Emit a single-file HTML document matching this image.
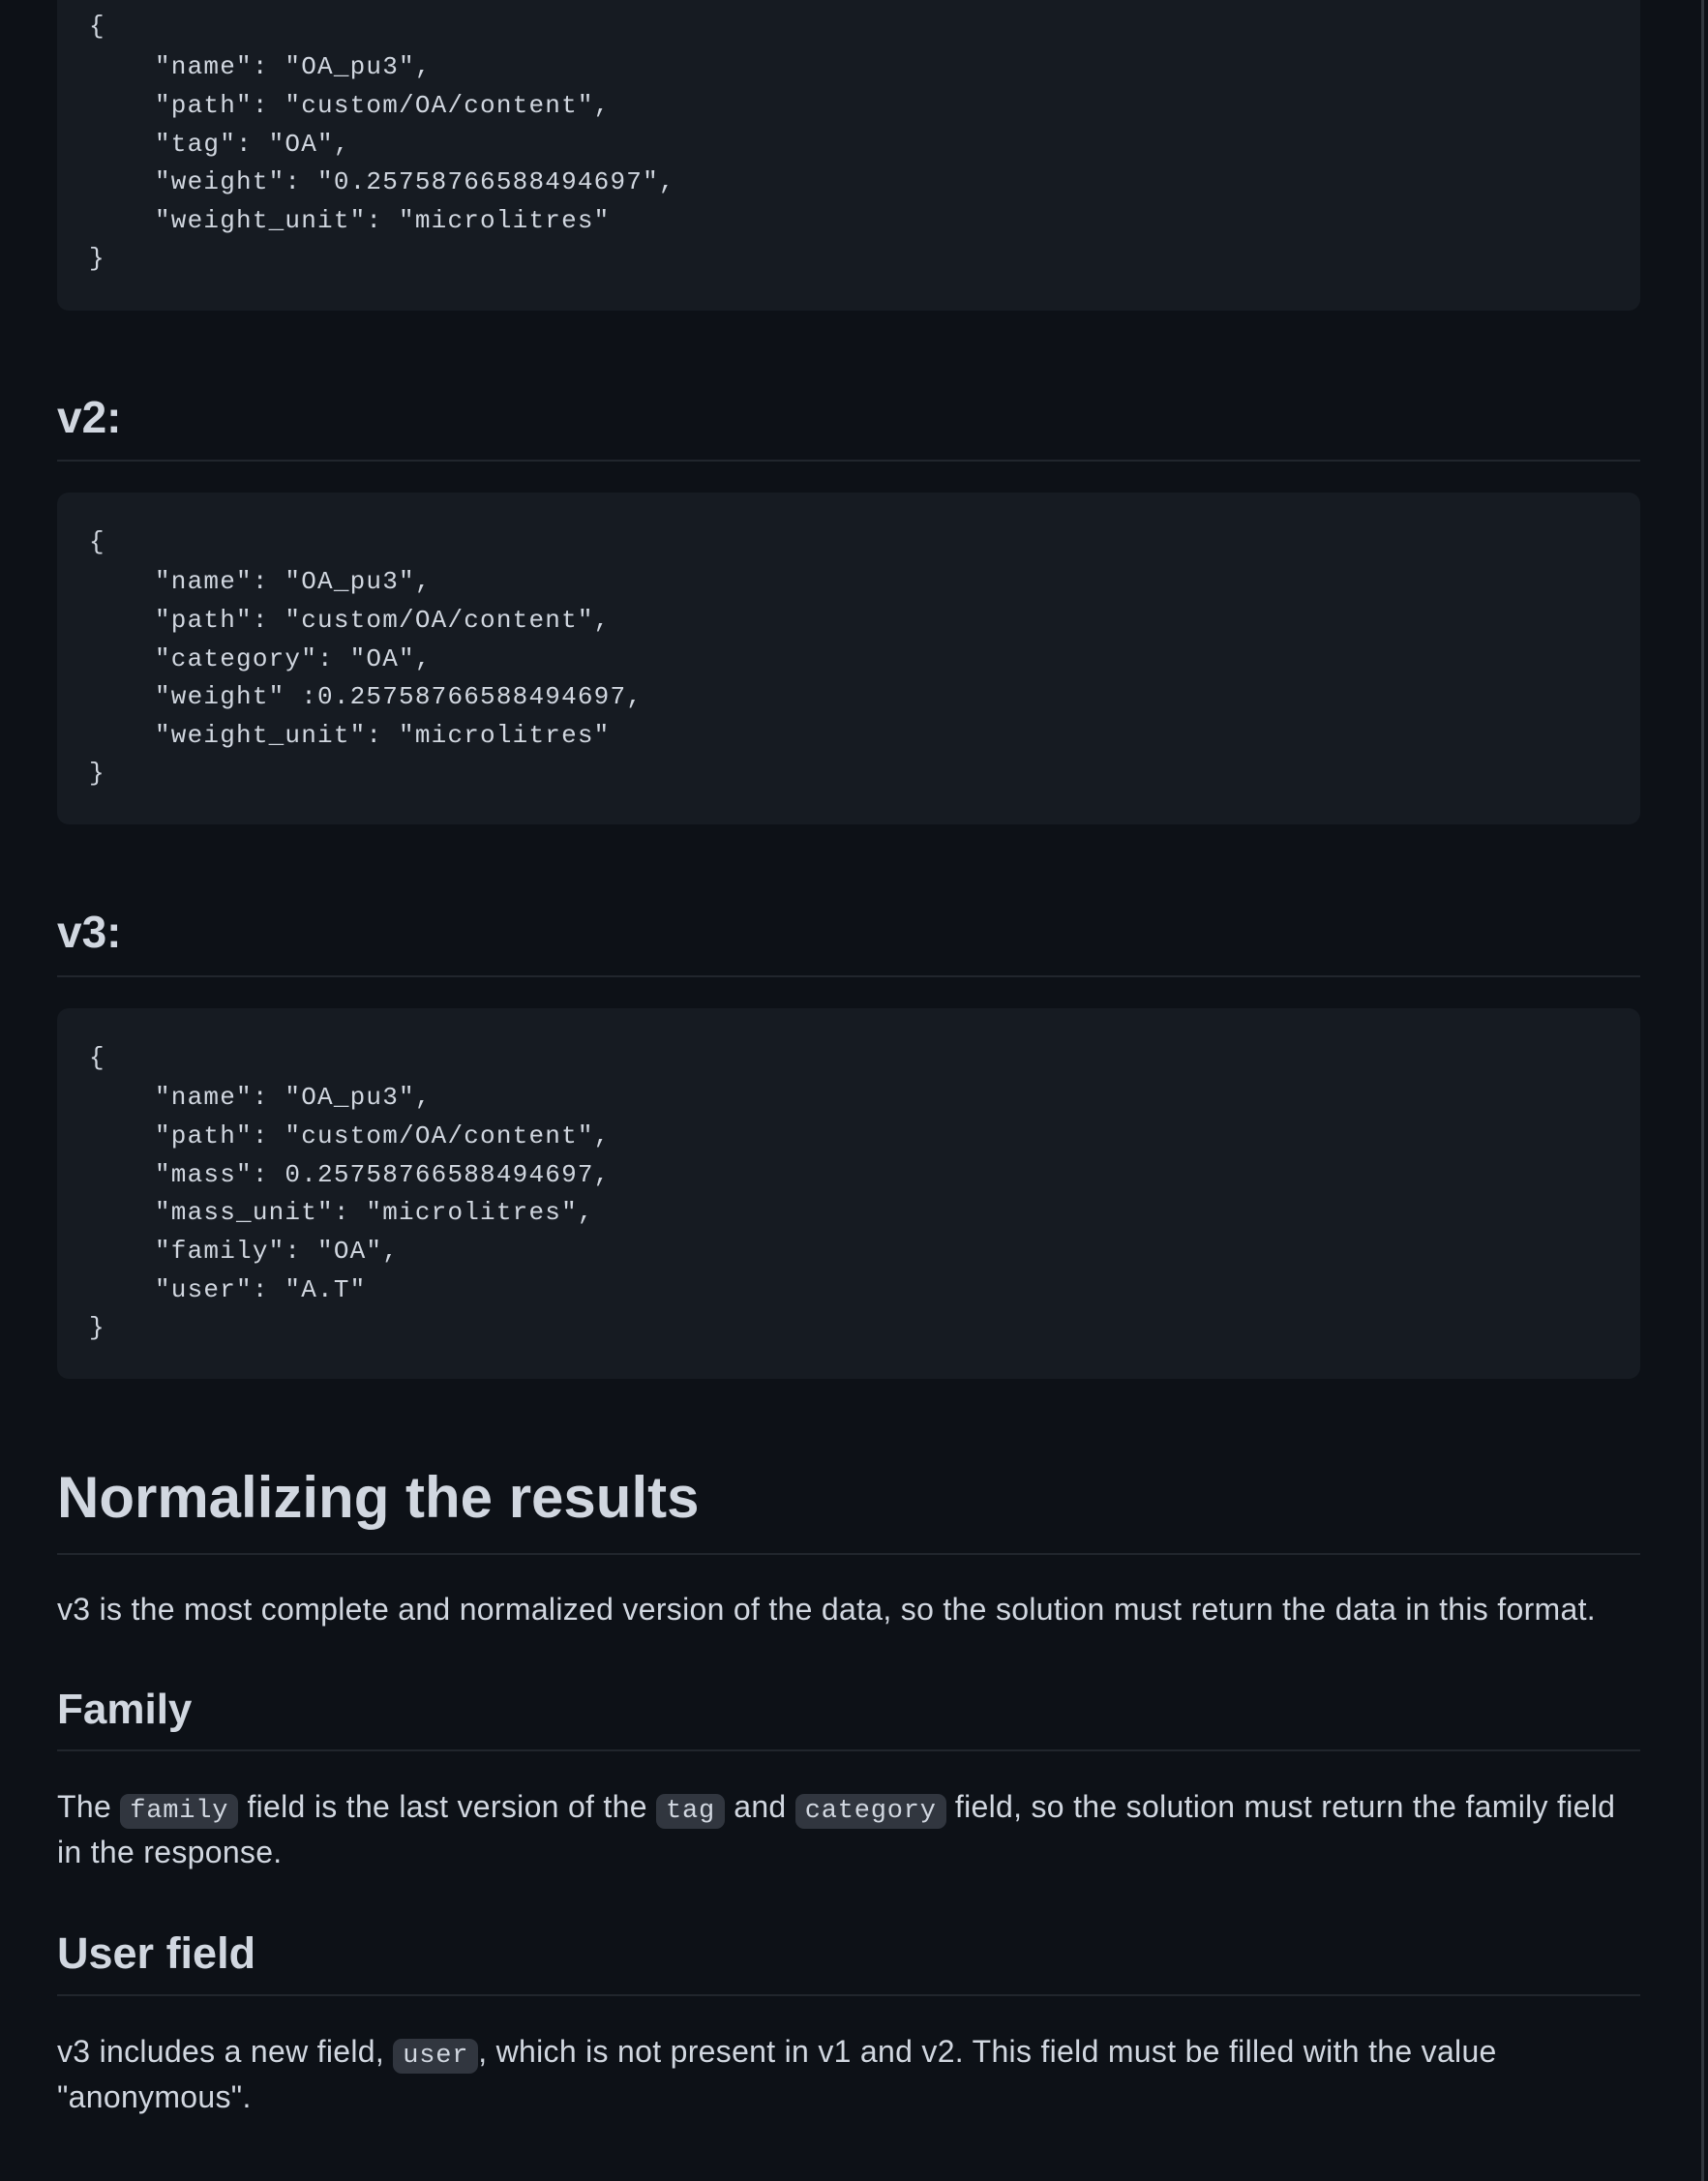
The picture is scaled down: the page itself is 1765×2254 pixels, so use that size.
<!DOCTYPE html>
<html><head><meta charset="utf-8"><style>
html,body{margin:0;padding:0;background:#0d1117;width:1765px;height:2254px;overflow:hidden}
body{position:relative;font-family:"Liberation Sans",sans-serif;color:#d1d7e0}
.blk{position:absolute;left:59px;width:1636px;background:#161b22;border-radius:12px}
.c{position:absolute;left:92px;font-family:"Liberation Mono",monospace;font-size:26px;letter-spacing:1.2px;line-height:40px;height:40px;white-space:pre;color:#d1d7e0}
.i{left:160px}
.h{position:absolute;left:59px;font-weight:bold;color:#d1d7e0;white-space:nowrap}
.rule{position:absolute;left:59px;width:1636px;height:2px;background:#21262d}
.p{position:absolute;left:59px;font-size:32px;letter-spacing:0.3px;line-height:48px;height:48px;white-space:nowrap}
code{font-family:"Liberation Mono",monospace;font-size:27px;letter-spacing:0.8px;background:#31363f;border-radius:9px;padding:3px 10px}
.vl{position:absolute;left:1758px;top:0;width:3px;height:2254px;background:#30363d}
</style></head><body>
<div class="vl"></div>
<div class="blk" style="top:-20px;height:341px"></div>
<div class="c" style="top:7px">{</div>
<div class="c i" style="top:49px">"name": "OA_pu3",</div>
<div class="c i" style="top:89px">"path": "custom/OA/content",</div>
<div class="c i" style="top:129px">"tag": "OA",</div>
<div class="c i" style="top:168px">"weight": "0.25758766588494697",</div>
<div class="c i" style="top:208px">"weight_unit": "microlitres"</div>
<div class="c" style="top:247px">}</div>

<div class="h" style="top:401px;font-size:46px;line-height:60px">v2:</div>
<div class="rule" style="top:475px"></div>

<div class="blk" style="top:509px;height:343px"></div>
<div class="c" style="top:540px">{</div>
<div class="c i" style="top:581px">"name": "OA_pu3",</div>
<div class="c i" style="top:621px">"path": "custom/OA/content",</div>
<div class="c i" style="top:661px">"category": "OA",</div>
<div class="c i" style="top:700px">"weight" :0.25758766588494697,</div>
<div class="c i" style="top:740px">"weight_unit": "microlitres"</div>
<div class="c" style="top:779px">}</div>

<div class="h" style="top:933px;font-size:46px;line-height:60px">v3:</div>
<div class="rule" style="top:1008px"></div>

<div class="blk" style="top:1042px;height:383px"></div>
<div class="c" style="top:1073px">{</div>
<div class="c i" style="top:1114px">"name": "OA_pu3",</div>
<div class="c i" style="top:1154px">"path": "custom/OA/content",</div>
<div class="c i" style="top:1194px">"mass": 0.25758766588494697,</div>
<div class="c i" style="top:1233px">"mass_unit": "microlitres",</div>
<div class="c i" style="top:1273px">"family": "OA",</div>
<div class="c i" style="top:1313px">"user": "A.T"</div>
<div class="c" style="top:1352px">}</div>

<div class="h" style="top:1508px;font-size:60px;line-height:80px">Normalizing the results</div>
<div class="rule" style="top:1605px"></div>

<div class="p" style="top:1639px">v3 is the most complete and normalized version of the data, so the solution must return the data in this format.</div>

<div class="h" style="top:1738px;font-size:44px;line-height:58px">Family</div>
<div class="rule" style="top:1808px"></div>

<div class="p" style="top:1843px">The <code>family</code> field is the last version of the <code>tag</code> and <code>category</code> field, so the solution must return the family field</div>
<div class="p" style="top:1890px">in the response.</div>

<div class="h" style="top:1990px;font-size:45px;line-height:58px">User field</div>
<div class="rule" style="top:2061px"></div>

<div class="p" style="top:2096px">v3 includes a new field, <code>user</code>, which is not present in v1 and v2. This field must be filled with the value</div>
<div class="p" style="top:2143px">"anonymous".</div>
</body></html>
